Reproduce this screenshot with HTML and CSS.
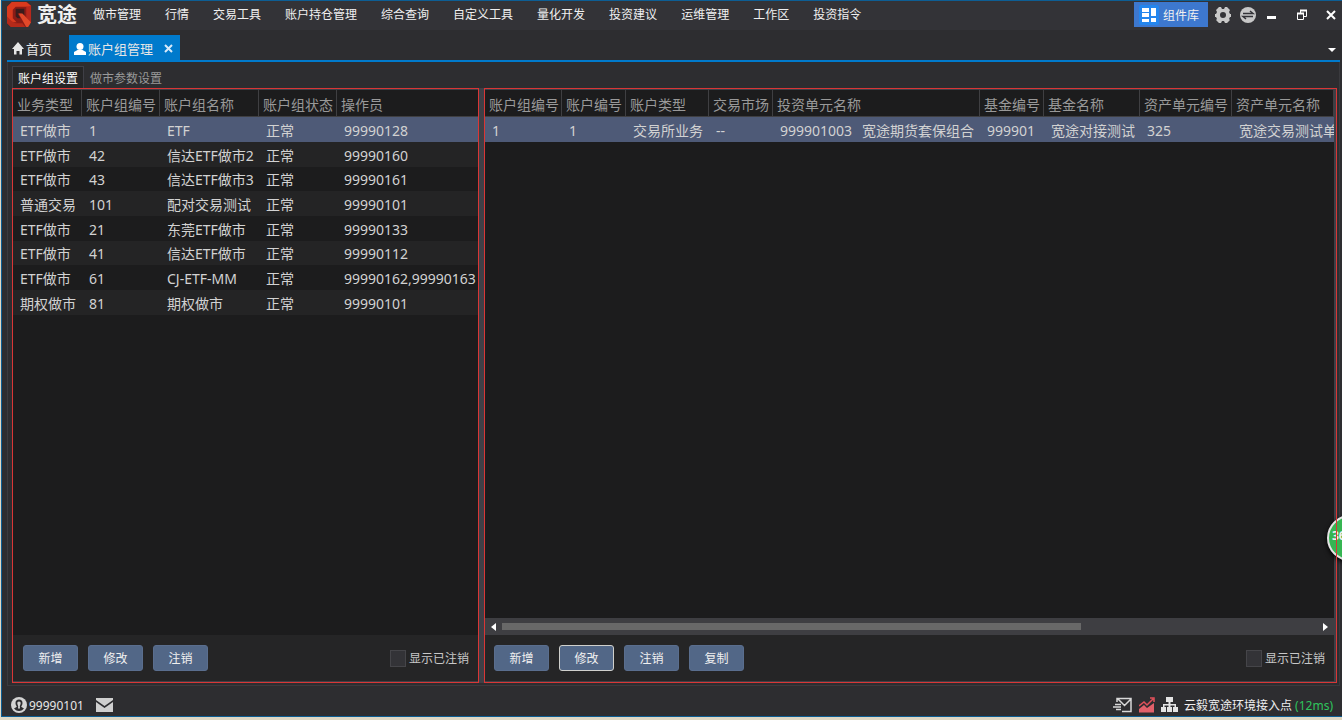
FILE: index.html
```html
<!DOCTYPE html>
<html lang="zh-CN">
<head>
<meta charset="utf-8">
<title>账户组管理</title>
<link rel="stylesheet" href="styles.css">
</head>
<body>
<div class="window">
  <header class="titlebar">
    <svg class="logo" viewBox="0 0 26 26" aria-hidden="true">
      <path fill="#8a1c16" d="M5 0h16l4 4v17l-4 5H4l-4-4V5z"/>
      <path fill="#d93a1e" d="M5 0h15l5 4v4l-4-3H9L6 8v9l4 4H5l-5-5V5z"/>
      <path fill="#b52a1a" d="M0 15l5 5 4 2h7l3 4H4l-4-4z"/>
      <path fill="#b8281c" d="M20 5l5-1v17l-5-5z"/>
      <path fill="#3a1c1c" d="M9 7h9v8l-3-3h-4l3 5h-3l-2-2z"/>
      <path fill="#e2492a" d="M12 12h4l9 9-3 5h-2z"/>
    </svg>
    <span class="brand">宽途</span>
    <nav class="menu">
      <button>做市管理</button><button>行情</button><button>交易工具</button><button>账户持仓管理</button><button>综合查询</button><button>自定义工具</button><button>量化开发</button><button>投资建议</button><button>运维管理</button><button>工作区</button><button>投资指令</button>
    </nav>
    <button class="widgets">
      <svg width="20" height="20" viewBox="0 0 20 20" aria-hidden="true"><rect width="20" height="20" rx="2" fill="#2486ee"/><path fill="#fff" d="M3 3h7v4H3zM3 8h7v4H3zM3 14h7v3H3zM12 3h5v8h-5zM12 13h5v4h-5z"/></svg>
      组件库
    </button>
    <button class="icon-btn gear" aria-label="设置">
      <svg width="16" height="16" viewBox="0 0 16 16"><path fill="#c8c8c8" fill-rule="evenodd" d="M4 0h2l1 2h2l1-2h2l3 3-1 2 1 2h1v3h-1l-1 2 1 1-3 3h-2l-1-2H7l-1 2H4l-3-3 1-1-1-2H0V7h1l1-2-1-2zM8 5a3 3 0 1 0 0 6 3 3 0 0 0 0-6z"/></svg>
    </button>
    <button class="icon-btn swap" aria-label="切换">
      <svg width="16" height="16" viewBox="0 0 16 16"><circle cx="8" cy="8" r="8" fill="#c8c8c8"/><path d="M3 6.500h10L10 4M13 9.500H3L6 12" fill="none" stroke="#333338" stroke-width="1.500"/></svg>
    </button>
    <button class="icon-btn minimize" aria-label="最小化"><svg width="12" height="12" viewBox="0 0 12 12"><path fill="#fff" d="M1 7h9v3H1z"/></svg></button>
    <button class="icon-btn restore" aria-label="还原"><svg width="12" height="12" viewBox="0 0 12 12"><path d="M4.500 4V1.500h6v6H8M1.500 4.500h6v6h-6z" fill="none" stroke="#fff"/><path d="M4 1.500h7M1 4.500h7" stroke="#fff" stroke-width="2"/></svg></button>
    <button class="icon-btn close" aria-label="关闭"><svg width="10" height="10" viewBox="0 0 10 10"><path d="M1 1l8 8M9 1L1 9" stroke="#fff" stroke-width="2"/></svg></button>
  </header>

  <div class="tabs">
    <button class="tab">
      <svg width="12" height="13" viewBox="0 0 12 13" aria-hidden="true"><path fill="#e6e6e6" d="M6 0l6 7h-2v5.500H7.500V9h-3v3.500H2V7H0z"/></svg>首页
    </button>
    <button class="tab active">
      <svg width="12" height="12" viewBox="0 0 12 12" aria-hidden="true"><circle cx="6" cy="3.500" r="3.500" fill="#fff"/><path fill="#fff" d="M0 12V9l3.500-2h5L12 9v3z"/></svg>账户组管理
      <svg class="tab-close" width="9" height="9" viewBox="0 0 9 9" aria-hidden="true"><path d="M1 1l7 7M8 1L1 8" stroke="#d8eafa" stroke-width="2"/></svg>
    </button>
    <button class="tab-list" aria-label="标签列表"><svg width="8" height="4" viewBox="0 0 8 4"><path fill="#fff" d="M0 0h8L4 4z"/></svg></button>
  </div>

  <main class="workspace">
    <div class="subtabs"><button class="subtab active">账户组设置</button><button class="subtab">做市参数设置</button></div>
    <div class="panels">
      <section class="panel groups">
        <div class="grid">
          <table>
            <colgroup><col class="w69"><col class="w78"><col class="w99"><col class="w78"><col></colgroup>
            <thead><tr><th>业务类型</th><th>账户组编号</th><th>账户组名称</th><th>账户组状态</th><th>操作员</th></tr></thead>
            <tbody>
              <tr class="selected"><td>ETF做市</td><td>1</td><td>ETF</td><td>正常</td><td>99990128</td></tr>
              <tr><td>ETF做市</td><td>42</td><td>信达ETF做市2</td><td>正常</td><td>99990160</td></tr>
              <tr><td>ETF做市</td><td>43</td><td>信达ETF做市3</td><td>正常</td><td>99990161</td></tr>
              <tr><td>普通交易</td><td>101</td><td>配对交易测试</td><td>正常</td><td>99990101</td></tr>
              <tr><td>ETF做市</td><td>21</td><td>东莞ETF做市</td><td>正常</td><td>99990133</td></tr>
              <tr><td>ETF做市</td><td>41</td><td>信达ETF做市</td><td>正常</td><td>99990112</td></tr>
              <tr><td>ETF做市</td><td>61</td><td>CJ-ETF-MM</td><td>正常</td><td>99990162,99990163</td></tr>
              <tr><td>期权做市</td><td>81</td><td>期权做市</td><td>正常</td><td>99990101</td></tr>
            </tbody>
          </table>
        </div>
        <div class="actions">
          <button class="btn">新增</button><button class="btn">修改</button><button class="btn">注销</button>
          <label class="check"><input type="checkbox">显示已注销</label>
        </div>
      </section>
      <section class="panel accounts">
        <div class="grid">
          <table>
            <colgroup><col class="w77"><col class="w64"><col class="w83"><col class="w64"><col class="w207"><col class="w64"><col class="w96"><col class="w92"><col></colgroup>
            <thead><tr><th>账户组编号</th><th>账户编号</th><th>账户类型</th><th>交易市场</th><th>投资单元名称</th><th>基金编号</th><th>基金名称</th><th>资产单元编号</th><th>资产单元名称</th></tr></thead>
            <tbody>
              <tr class="selected"><td>1</td><td>1</td><td>交易所业务</td><td>--</td><td><span class="unit-code">999901003</span>宽途期货套保组合</td><td>999901</td><td>宽途对接测试</td><td>325</td><td>宽途交易测试单</td></tr>
            </tbody>
          </table>
        </div>
        <div class="scrollbar">
          <button class="arrow" aria-label="向左滚动"><svg width="5" height="8" viewBox="0 0 5 8"><path fill="#fff" d="M5 0v8L0 4z"/></svg></button>
          <div class="track"><div class="thumb"></div></div>
          <button class="arrow" aria-label="向右滚动"><svg width="5" height="8" viewBox="0 0 5 8"><path fill="#fff" d="M0 0v8l5-4z"/></svg></button>
        </div>
        <div class="actions">
          <button class="btn">新增</button><button class="btn focused">修改</button><button class="btn">注销</button><button class="btn">复制</button>
          <label class="check"><input type="checkbox">显示已注销</label>
        </div>
      </section>
    </div>
  </main>

  <footer class="status">
    <svg width="16" height="16" viewBox="0 0 16 16" aria-hidden="true"><circle cx="8" cy="8" r="8" fill="#d4d4d4"/><path fill="#2d2d30" d="M8 2.500c2.300 0 3.500 1.500 3.500 3.500 0 1.600-.6 2.600-1.300 3.500.2 1 1.800 1.200 2.800 1.800-1 1.500-2.500 2.700-5 2.700s-4-1.200-5-2.700c1-.6 2.600-.8 2.800-1.800C5.100 8.600 4.500 7.600 4.500 6c0-2 1.200-3.500 3.500-3.500z"/><path fill="#d4d4d4" d="M8 4.500c1.200 0 1.700.7 1.700 1.800S9 8.500 8.800 9.300L9 11.500H7l.2-2.200C7 8.500 6.300 7.400 6.300 6.300S6.800 4.500 8 4.500z"/></svg>
    <span class="user">99990101</span>
    <svg width="17" height="14" viewBox="0 0 17 14" aria-hidden="true"><path fill="#cfcfcf" d="M0 0h17v2L8.500 8 0 2zM0 4l8.500 6L17 4v10H0z"/></svg>
    <div class="status-right">
      <svg width="20" height="16" viewBox="0 0 20 16" aria-hidden="true"><path d="M4 5V1.500h14v13H9M5 2l6.500 6.500L18 2M2 7.500h6M0 10h8M3 12.500h5" fill="none" stroke="#d8d8d8" stroke-width="1.500"/></svg>
      <svg width="16" height="16" viewBox="0 0 16 16" aria-hidden="true"><path fill="#e2606a" d="M0 12l5-4 3 3 7-5v9.500H0z"/><path d="M0 9l5-4 3 3 6-6M11 1h4v4" fill="none" stroke="#e0505a" stroke-width="1.500"/></svg>
      <svg width="17" height="16" viewBox="0 0 17 16" aria-hidden="true"><path fill="#e4e4e4" d="M5 0h7v5H9.500v2H15v3h2v5h-5v-5h1.500V8.500h-4V10H11v5H6v-5h1.500V8.500h-4V10H5v5H0v-5h2V7h5.500V5H5z"/></svg>
      <span class="server">云毅宽途环境接入点 <span class="ping">(12ms)</span></span>
    </div>
  </footer>
  <div class="float-ball">36</div>
</div>
</body>
</html>
```
FILE: styles.css
```css
* { box-sizing: border-box; }

body {
  margin: 0;
  background: #dfd8c4;
  font-family: "Noto Sans", "Noto Sans CJK SC", sans-serif;
  font-size: 12px;
  color: #f0f0f0;
}

button {
  padding: 0;
  border: 0;
  background: none;
  color: inherit;
  font: inherit;
}

svg { display: block; flex: none; }

.window {
  position: relative;
  display: flex;
  flex-direction: column;
  height: calc(100vh - 3px);
  margin-left: 1px;
  overflow: hidden;
  border: 1px solid #0d5e94;
  border-right: 0;
  background: #2d2d30;
}

.titlebar {
  display: flex;
  align-items: center;
  height: 29px;
  padding: 0 6px 2px 5px;
  background: #333337;
}

.logo { width: 25px; height: 25px; }

.brand {
  margin-left: 5px;
  font-size: 20px;
  font-weight: 700;
  line-height: 26px;
}

.menu {
  display: flex;
  flex: 1;
  gap: 24px;
  margin-left: 16px;
  line-height: 26px;
  white-space: nowrap;
}

.widgets {
  display: flex;
  align-items: center;
  gap: 4px;
  height: 25px;
  padding: 0 9px 0 5px;
  background: #3d78cf;
}

.icon-btn { display: flex; }
.gear { margin-left: 7px; }
.swap { margin-left: 9px; }
.minimize { margin-left: 10px; }
.restore { margin-left: 18px; }
.close { margin-left: 18px; }

.tabs {
  display: flex;
  align-items: flex-end;
  height: 32px;
  margin: 0 2px 0 5px;
  border-bottom: 2px solid #007acc;
  font-size: 13px;
}

.tab {
  display: flex;
  align-items: center;
  gap: 2px;
  height: 25px;
  padding: 2px 5px 0;
  color: #e6e6e6;
}

.tab.active {
  margin-left: 12px;
  padding-right: 7px;
  background: #007acc;
}

.tab-close { margin-left: 9px; }

.tab-list { margin: 0 4px 8px auto; }

.workspace {
  display: flex;
  flex: 1;
  flex-direction: column;
  min-height: 0;
  margin: 0 2px 0 5px;
  padding: 4px 2px 2px 4px;
  border: 1px solid #3a3a3e;
  border-top: 0;
}

.subtabs { display: flex; height: 22px; }

.subtab {
  padding: 3px 6px 0;
  color: #999;
  line-height: 19px;
}

.subtab.active {
  padding: 2px 5px 0;
  border: 1px solid #3f3f46;
  border-bottom: 0;
  background: #252526;
  color: #fff;
}

.panels {
  display: flex;
  flex: 1;
  gap: 5px;
  min-height: 0;
  background: #3f3f46;
}

.panel {
  position: relative;
  display: flex;
  flex-direction: column;
  padding: 2px 1px;
  min-width: 0;
}

/* Highlight frame, drawn above the floating ball */
.panel::after {
  content: "";
  position: absolute;
  z-index: 3;
  inset: 0;
  border: 1px solid #d93636;
  pointer-events: none;
}

.groups { flex: 0 0 467px; }

.accounts {
  flex: 1;
  padding-right: 3px;
}

.grid {
  flex: 1;
  min-height: 0;
  overflow: hidden;
  background: #1c1c1d;
}

table {
  width: 100%;
  table-layout: fixed;
  border-collapse: separate;
  border-spacing: 0;
  font-size: 14px;
  line-height: 20px;
  white-space: nowrap;
}

.w64 { width: 64px; }
.w69 { width: 69px; }
.w77 { width: 77px; }
.w78 { width: 78px; }
.w83 { width: 83px; }
.w92 { width: 92px; }
.w96 { width: 96px; }
.w99 { width: 99px; }
.w207 { width: 207px; }

th {
  height: 27px;
  padding: 3px 0 0 4px;
  border-right: 1px solid #3f3f42;
  border-bottom: 1px solid #3f3f42;
  color: #999;
  font-weight: 400;
  text-align: left;
}

.groups th:last-child { border-right: 0; }

td {
  height: 25px;
  padding: 2px 0 0 7px;
  overflow: hidden;
  color: #d2d2d2;
}

tr:nth-child(3n) td { height: 24px; }
tr:nth-child(even) td { background: #242425; }
tr.selected td { background: #4e5a77; }

.unit-code { margin-right: 10px; }

.scrollbar {
  display: flex;
  align-items: center;
  gap: 6px;
  height: 17px;
  padding: 0 6px;
  background: #3e3e42;
}

.track { flex: 1; }

.thumb {
  width: 71%;
  height: 7px;
  background: #686868;
}

.actions {
  display: flex;
  align-items: center;
  gap: 10px;
  height: 46px;
  padding: 0 9px 0 10px;
  background: #252526;
}

.accounts .actions { padding-left: 9px; }

.btn {
  width: 55px;
  height: 26px;
  border: 1px solid #5a6e8e;
  border-radius: 3px;
  background: #526787;
}

.btn.focused { border-color: #d0d0cc; }

.check {
  display: flex;
  align-items: center;
  gap: 3px;
  margin-left: auto;
  color: #c8c8c8;
}

.check input {
  width: 16px;
  height: 17px;
  margin: 0;
  appearance: none;
  border: 1px solid #454549;
  background: #333337;
}

.status {
  display: flex;
  align-items: center;
  height: 30px;
  padding: 8px 9px 0;
}

.user {
  margin: 0 12px 0 2px;
  color: #e6e6e6;
}

.status-right {
  display: flex;
  align-items: center;
  gap: 6px;
  margin-left: auto;
}

.ping { color: #2fc45c; }

.float-ball {
  position: absolute;
  z-index: 2;
  top: 514px;
  right: -31px;
  width: 46px;
  height: 46px;
  padding-left: 3px;
  border: 2px solid #e4e4e4;
  border-radius: 50%;
  background: #36b552;
  box-shadow: 0 2px 5px #000;
  font-weight: 700;
  line-height: 38px;
}
```
